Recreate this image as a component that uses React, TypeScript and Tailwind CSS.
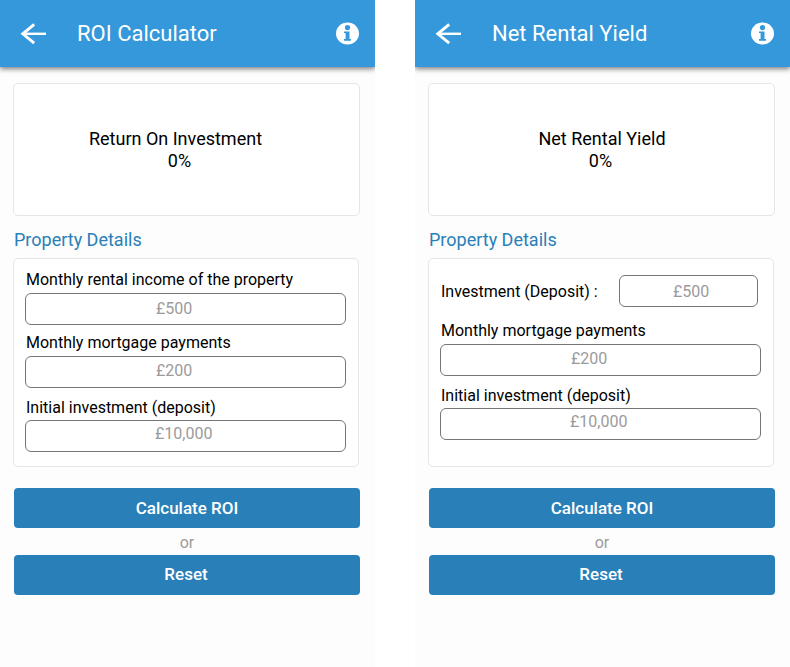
import React from "react";

function BackIcon() {
  return (
    <svg width="27" height="22" viewBox="0 0 27 22" fill="none" stroke="currentColor">
      <path d="M14.2 1.4 2.8 10.8 14.2 20.2" strokeWidth="2.9" />
      <path d="M2.5 10.8H26" strokeWidth="2.4" />
    </svg>
  );
}

function InfoIcon() {
  return (
    <svg width="23" height="23" viewBox="0 0 23 23">
      <ellipse cx="11.5" cy="11.5" rx="11.5" ry="11" fill="#fff" />
      <circle cx="11.5" cy="5.6" r="2.6" fill="#3498db" />
      <path d="M8 9.4h5.5v7.7H15v1.6H8v-1.6h1.6V11H8Z" fill="#3498db" />
    </svg>
  );
}

function Header({ title }: { title: string }) {
  return (
    <header className="z-10 flex h-[67px] shrink-0 items-center bg-[#3498db] pl-5 pr-4 text-white shadow-[0_2px_5px_rgba(0,0,0,0.5)]">
      <BackIcon />
      <h1 className="ml-[30px] grow text-[22px] leading-[26px]">{title}</h1>
      <InfoIcon />
    </header>
  );
}

function Result({ label, value, labelClass, valueClass }: { label: string; value: string; labelClass: string; valueClass: string }) {
  return (
    <section className="h-[133px] w-[347px] rounded-[5px] border border-[#e6e6e6] bg-white pt-[44px] text-center text-lg leading-[22px]">
      <p className={labelClass}>{label}</p>
      <p className={valueClass}>{value}</p>
    </section>
  );
}

function Field({ label, value, labelClass, boxClass }: { label: string; value: string; labelClass: string; boxClass: string }) {
  return (
    <div>
      <p className={`pl-px text-base ${labelClass}`}>{label}</p>
      <div className={`h-8 w-[321px] rounded-[6px] border border-[#757575] text-base text-[#9b9b9b] ${boxClass}`}>{value}</div>
    </div>
  );
}

function Actions() {
  return (
    <div className="mt-[21px] ml-px w-[346px] text-center">
      <button className="block h-10 w-full rounded-[4px] bg-[#2980b9] text-[17px] font-medium leading-10 text-white">Calculate ROI</button>
      <p className="h-[27px] text-base leading-[29px] text-[#9b9b9b]">or</p>
      <button className="block h-10 w-full rounded-[4px] bg-[#2980b9] pr-0.5 pb-0.5 text-[17px] font-medium leading-[38px] text-white">Reset</button>
    </div>
  );
}

function Screen({ title, children }: { title: string; children: React.ReactNode }) {
  return (
    <main className="flex h-[667px] w-[375px] flex-col overflow-hidden bg-[#fdfdfd]">
      <Header title={title} />
      <div className="pl-[13px] pt-4">{children}</div>
    </main>
  );
}

const detailsTitle = "ml-px h-[42px] pt-3 text-lg leading-6 text-[#2980b9]";
const detailsCard = "h-[209px] w-[346px] rounded-[5px] border border-[#e6e6e6] bg-white pl-[11px]";

export default function App() {
  return (
    <div className="flex h-[667px] w-[790px] justify-between overflow-hidden bg-white font-['Roboto',sans-serif] text-black">
      <Screen title="ROI Calculator">
        <Result label="Return On Investment" value="0%" labelClass="pr-[22px]" valueClass="pr-[14px]" />
        <h2 className={detailsTitle}>Property Details</h2>
        <section className={`${detailsCard} pt-[9px]`}>
          <Field label="Monthly rental income of the property" value="£500" labelClass="h-[25px] leading-[23px]" boxClass="pl-[130px] leading-[30px]" />
          <Field label="Monthly mortgage payments" value="£200" labelClass="mt-[7px] h-6 leading-[22px]" boxClass="pl-[130px] leading-[28px]" />
          <Field label="Initial investment (deposit)" value="£10,000" labelClass="mt-[7px] h-[25px] leading-[25px]" boxClass="pl-[129px] leading-[25px]" />
        </section>
        <Actions />
      </Screen>
      <Screen title="Net Rental Yield">
        <Result label="Net Rental Yield" value="0%" labelClass="pl-px" valueClass="pr-[2px]" />
        <h2 className={detailsTitle}>Property Details</h2>
        <section className={`${detailsCard} pt-4`}>
          <div className="flex h-8">
            <p className="w-[179px] pl-px text-base leading-[34px]">Investment (Deposit) :</p>
            <div className="h-8 w-[139px] rounded-[6px] border border-[#757575] pl-[53px] text-base leading-[32px] text-[#9b9b9b]">£500</div>
          </div>
          <Field label="Monthly mortgage payments" value="£200" labelClass="mt-3 h-[25px] leading-[23px]" boxClass="pl-[130px] leading-[27px]" />
          <Field label="Initial investment (deposit)" value="£10,000" labelClass="mt-[7px] h-[25px] leading-[25px]" boxClass="pl-[129px] leading-[25px]" />
        </section>
        <Actions />
      </Screen>
    </div>
  );
}
